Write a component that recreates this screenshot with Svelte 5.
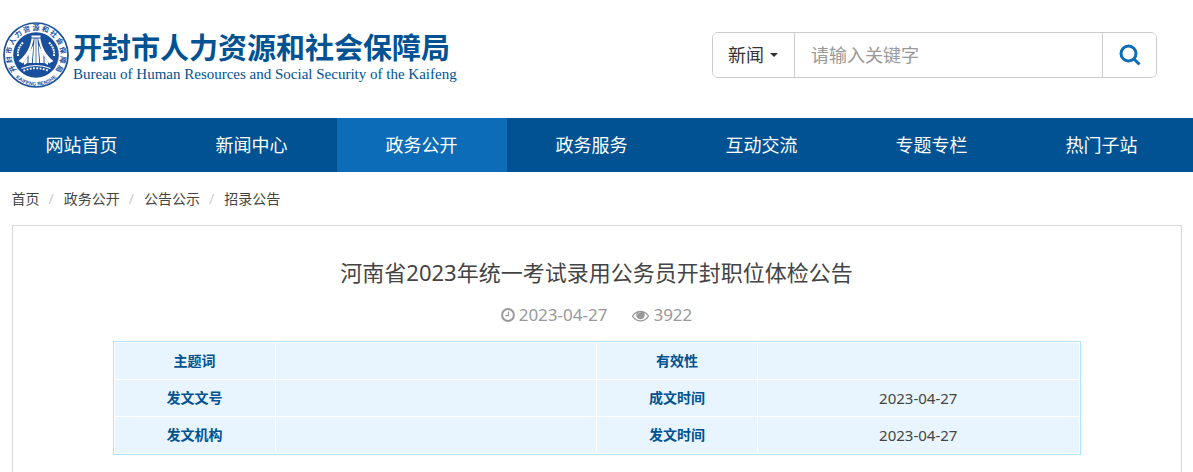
<script>
  let keyword = ''
  let type = 'news'

  const nav = [
    { name: '网站首页' },
    { name: '新闻中心' },
    { name: '政务公开', active: true },
    { name: '政务服务' },
    { name: '互动交流' },
    { name: '专题专栏' },
    { name: '热门子站' }
  ]

  const crumbs = ['首页', '政务公开', '公告公示', '招录公告']

  const rows = [
    ['主题词', '', '有效性', ''],
    ['发文文号', '', '成文时间', '2023-04-27'],
    ['发文机构', '', '发文时间', '2023-04-27']
  ]
</script>

<header>
  <a class="logo" href="#home">
    <svg class="emblem" viewBox="0 0 66 66" aria-hidden="true">
      <defs>
        <path id="ring-top" d="M14.600 49.400 A24.700 24.700 0 1 1 51.400 49.400" />
        <path id="ring-bottom" d="M6 46 A29.500 29.500 0 0 0 60 46" />
      </defs>
      <circle cx="33" cy="33" r="32" fill="#fff" stroke="#1a4f9c" stroke-width="1.7" />
      <circle cx="33" cy="33" r="22.800" fill="#1a4f9c" />
      <g fill="#fff">
        <path d="M28.500 13.500h9v2h-9z" />
        <path d="M28.600 16.500h2.300L27 31l-7 10.500-4.500-2.500C23 33 27 26 28.600 16.500z" />
        <path d="M37.400 16.500h-2.300L39 31l7 10.500 4.500-2.500C43 33 39 26 37.400 16.500z" />
        <path d="M31.500 16.500h1.100V41h-2.800z" />
        <path d="M34.500 16.500h-1.100V41h2.800z" />
        <path d="M30.500 22.500L28.800 41h-3.300V33z" />
        <path d="M35.500 22.500L37.200 41h3.300V33z" />
        <path d="M24.500 35v6l-3.500 2v-3z" />
        <path d="M41.500 35v6l3.500 2v-3z" />
      </g>
      <g fill="none" stroke="#fff">
        <path d="M18.500 46.500Q33 40.500 47.500 46.500" stroke-width="1.2" />
        <path d="M20.500 48.800Q33 43.500 45.500 48.800" stroke-width="2" stroke-dasharray="1.800 1.500" />
        <path d="M15 34Q14 26 20.500 20M51 34Q52 26 45.500 20" stroke-width="2" stroke-dasharray="1.800 .8" />
      </g>
      <text class="ring-cn"><textPath href="#ring-top" startOffset="50%" text-anchor="middle">开 封 市 人 力 资 源 和 社 会 保 障 局</textPath></text>
      <text class="ring-en"><textPath href="#ring-bottom" startOffset="50%" text-anchor="middle">KAIFENG RENSHE</textPath></text>
    </svg>
    <span class="site-name">
      <strong>开封市人力资源和社会保障局</strong>
      <span class="en">Bureau of Human Resources and Social Security of the Kaifeng</span>
    </span>
  </a>

  <form class="search" on:submit|preventDefault>
    <div class="type">
      <select bind:value={type} aria-label="搜索类型">
        <option value="news">新闻</option>
      </select>
      <svg class="caret" viewBox="0 0 8 4" aria-hidden="true"><path d="M0 0h8L4 4z" /></svg>
    </div>
    <input type="text" bind:value={keyword} placeholder="请输入关键字" aria-label="关键字">
    <button type="submit" aria-label="搜索">
      <svg viewBox="0 0 22 22" aria-hidden="true">
        <circle cx="9.500" cy="9.500" r="7.500" />
        <path d="M14.500 14.500l6 6" />
      </svg>
    </button>
  </form>
</header>

<nav>
  <div class="container">
    <ul class="menu">
      {#each nav as item}
        <li><a href="#nav" class:active={item.active}>{item.name}</a></li>
      {/each}
    </ul>
  </div>
</nav>

<main class="container">
  <ol class="breadcrumb">
    {#each crumbs as crumb}
      <li><a href="#crumb">{crumb}</a></li>
    {/each}
  </ol>

  <article>
    <h1>河南省2023年统一考试录用公务员开封职位体检公告</h1>
    <div class="meta">
      <span>
        <svg class="clock" viewBox="0 0 14 14" aria-hidden="true">
          <circle cx="7" cy="7" r="5.900" />
          <path d="M7.500 3.500v4.200H4.500" />
        </svg>
        2023-04-27
      </span>
      <span>
        <svg class="eye" viewBox="0 0 1792 1792" aria-hidden="true">
          <path d="M1664 960q-152-236-381-353 61 104 61 225 0 185-131.500 316.500t-316.500 131.500-316.500-131.500-131.500-316.500q0-121 61-225-229 117-381 353 133 205 333.500 326.500t434.500 121.500 434.500-121.500 333.500-326.500zm-720-384q0-20-14-34t-34-14q-125 0-214.500 89.500t-89.500 214.500q0 20 14 34t34 14 34-14 14-34q0-86 61-147t147-61q20 0 34-14t14-34zm848 384q0 34-20 69-140 230-376.500 368.500t-499.500 138.500-499.500-139-376.500-368q-20-35-20-69t20-69q140-229 376.500-368t499.500-139 499.500 139 376.500 368q20 35 20 69z" />
          <circle cx="940" cy="880" r="330" />
        </svg>
        3922
      </span>
    </div>

    <table>
      <tbody>
        {#each rows as row}
          <tr>
            <th scope="row">{row[0]}</th>
            <td>{row[1]}</td>
            <th scope="row">{row[2]}</th>
            <td>{row[3]}</td>
          </tr>
        {/each}
      </tbody>
    </table>
  </article>
</main>

<style>
  :global(body) {
    margin: 0;
    background: #fff;
    color: #444;
    font-family: 'Noto Sans', 'Noto Sans CJK SC', sans-serif;
    font-size: 14px;
    line-height: 20px;
  }

  a {
    color: inherit;
    text-decoration: none;
  }

  ul,
  ol {
    list-style: none;
    margin: 0;
    padding: 0;
  }

  .container {
    max-width: 1170px;
    margin: 0 auto;
  }

  header {
    display: flex;
    justify-content: space-between;
    align-items: center;
    box-sizing: border-box;
    height: 118px;
    padding: 0 36px 8px 3px;
  }

  .logo {
    display: flex;
    align-items: center;
    gap: 4px;
    color: #005293;
    white-space: nowrap;
  }

  .emblem {
    width: 66px;
    height: 66px;
  }

  .ring-cn {
    font-family: 'Noto Sans CJK SC', sans-serif;
    font-size: 7px;
    font-weight: 700;
    fill: #1a4f9c;
  }

  .ring-en {
    font-family: 'Liberation Sans', sans-serif;
    font-size: 5px;
    font-weight: 700;
    fill: #1a4f9c;
  }

  .site-name {
    display: flex;
    flex-direction: column;
    padding-top: 6px;
  }

  .site-name strong {
    font-size: 29px;
    line-height: 32px;
  }

  .en {
    font-family: 'Liberation Serif', serif;
    font-size: 15px;
    line-height: 20px;
  }

  .search {
    display: flex;
    box-sizing: border-box;
    width: 445px;
    height: 46px;
    border: 1px solid #ccc;
    border-radius: 6px;
    overflow: hidden;
  }

  .type {
    display: grid;
    align-items: center;
    width: 81px;
    border-right: 1px solid #ccc;
  }

  .type select,
  .caret {
    grid-area: 1 / 1;
  }

  .type select {
    appearance: none;
    height: 44px;
    padding: 0 15px;
    border: 0;
    background: #fff;
    color: #333;
    font: inherit;
    font-size: 18px;
  }

  .caret {
    justify-self: end;
    width: 8px;
    height: 4px;
    margin-right: 16px;
    fill: #333;
    pointer-events: none;
  }

  .search input {
    flex: 1;
    min-width: 0;
    padding: 0 16px;
    border: 0;
    color: #555;
    font: inherit;
    font-size: 18px;
  }

  .search input::placeholder {
    color: #999;
  }

  .search button {
    display: flex;
    align-items: center;
    justify-content: center;
    width: 54px;
    padding: 0;
    border: 0;
    border-left: 1px solid #ccc;
    background: #fff;
  }

  .search button svg {
    width: 22px;
    height: 22px;
    fill: none;
    stroke: #0c6cb7;
    stroke-width: 3;
  }

  nav {
    background: #005293;
    overflow: hidden;
  }

  .menu {
    display: flex;
    margin: 0 -15px;
  }

  .menu li {
    flex: 0 0 170px;
  }

  .menu a {
    display: block;
    color: #fff;
    font-size: 18px;
    line-height: 54px;
    text-align: center;
  }

  .menu a.active {
    background: #0c6cb7;
  }

  .breadcrumb {
    display: flex;
    padding: 17px 0 16px;
  }

  .breadcrumb li + li::before {
    content: '/';
    padding: 0 10px 0 9px;
    color: #ccc;
  }

  article {
    box-sizing: border-box;
    min-height: 247px;
    padding: 28px 100px 0;
    border: 1px solid #d8d8d8;
    border-bottom: 0;
  }

  h1 {
    margin: 0;
    font-size: 22px;
    font-weight: 400;
    line-height: 36px;
    text-align: center;
  }

  .meta {
    display: flex;
    justify-content: center;
    gap: 25px;
    padding: 13px 0 14px;
    color: #999;
    font-size: 17px;
    line-height: 24px;
  }

  .meta span {
    display: flex;
    align-items: center;
    gap: 4px;
  }

  .clock {
    width: 14px;
    height: 14px;
    fill: none;
    stroke: #999;
    stroke-width: 2;
  }

  .clock path {
    stroke-width: 1.2;
  }

  .eye {
    width: 17px;
    height: 17px;
    fill: #999;
  }

  table {
    width: 100%;
    border: 1px solid #b3e1fb;
    border-collapse: separate;
    border-spacing: 1px;
    table-layout: fixed;
  }

  th,
  td {
    height: 36px;
    padding: 0;
    background: #e8f5fe;
    text-align: center;
  }

  th {
    width: 160px;
    color: #005293;
    font-weight: 700;
  }

  td {
    font-size: 15px;
  }
</style>
